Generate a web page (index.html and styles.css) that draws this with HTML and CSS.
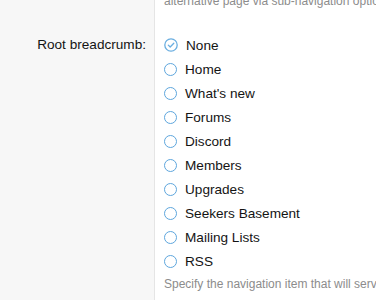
FILE: index.html
```html
<!DOCTYPE html>
<html lang="en">
<head>
    <meta charset="UTF-8">
    <meta name="viewport" content="width=device-width, initial-scale=1.0">
    <title>Navigation options</title>
    <link rel="stylesheet" href="styles.css">
</head>
<body>

    <div class="form-block">
        <!-- Previous row (only its hint is visible) -->
        <div class="form-row form-row-prev">
            <div class="form-label"></div>
            <div class="form-input">
                <p class="hint">alternative page via sub-navigation options. Leave blank to use the default.</p>
            </div>
        </div>

        <div class="form-row">
            <div class="form-label">Root breadcrumb:</div>
            <div class="form-input">
                <ul class="radio-list">
                    <li class="radio checked">
                        <svg class="radio-icon" viewBox="0 0 14 14" width="14" height="14">
                            <circle cx="7" cy="7" r="6.2" fill="none" stroke="#6aaee0" stroke-width="1.3"/>
                            <path d="M4.3 7.1 L6.2 9 L9.8 5.2" fill="none" stroke="#6aaee0" stroke-width="1.3" stroke-linecap="round" stroke-linejoin="round"/>
                        </svg>
                        <span>None</span>
                    </li>
                    <li class="radio"><span class="circle"></span><span>Home</span></li>
                    <li class="radio"><span class="circle"></span><span>What's new</span></li>
                    <li class="radio"><span class="circle"></span><span>Forums</span></li>
                    <li class="radio"><span class="circle"></span><span>Discord</span></li>
                    <li class="radio"><span class="circle"></span><span>Members</span></li>
                    <li class="radio"><span class="circle"></span><span>Upgrades</span></li>
                    <li class="radio"><span class="circle"></span><span>Seekers Basement</span></li>
                    <li class="radio"><span class="circle"></span><span>Mailing Lists</span></li>
                    <li class="radio"><span class="circle"></span><span>RSS</span></li>
                </ul>
                <p class="hint">Specify the navigation item that will serve as the root breadcrumb for this page.</p>
            </div>
        </div>
    </div>

</body>
</html>
```

FILE: styles.css
```css
body {
    font-family: "Liberation Sans", Arial, sans-serif;
    margin: 0;
    background-color: #fff;
    color: #141414;
    overflow: hidden;
}
.form-block {
    margin-top: -7px;
}
.form-row {
    display: grid;
    grid-template-columns: 155px 1fr;
}
.form-label {
    background-color: #f7f7f7;
    border-right: 1px solid #e5e5e5;
    text-align: right;
    font-size: 13.6px;
    line-height: 24px;
    padding: 21px 8px 0 0;
}
.form-row-prev .form-label {
    padding: 0;
}
.form-input {
    padding: 21px 0 20px 9px;
    white-space: nowrap;
    overflow: hidden;
}
.form-row-prev .form-input {
    padding: 0 0 3px 8px;
}
.hint {
    margin: 0;
    font-size: 12px;
    line-height: 16px;
    color: #8c8c8c;
    padding-left: 1px;
}
.radio-list {
    list-style: none;
    margin: 0;
    padding: 0 0 3px 0;
}
.radio {
    display: flex;
    align-items: center;
    height: 24px;
    font-size: 13.6px;
}
.radio-icon {
    margin-right: 8px;
    flex-shrink: 0;
}
.circle {
    width: 11px;
    height: 11px;
    border: 1.5px solid #5ea6dd;
    border-radius: 50%;
    margin-right: 8px;
    flex-shrink: 0;
}
.radio-list + .hint {
    margin-left: -1px;
}
```
